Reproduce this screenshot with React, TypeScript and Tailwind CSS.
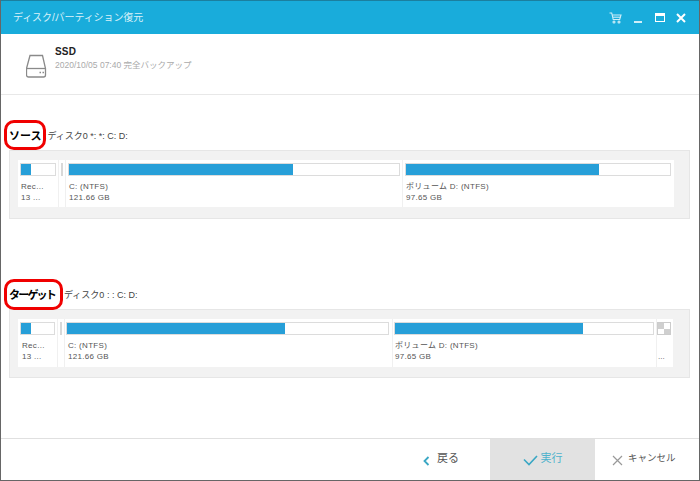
const font = "font-['Liberation_Sans','Noto_Sans_CJK_JP',sans-serif]";

function Part({ w, fill, l1, l2, ml = "", px = "pl-[1px]" }: { w: number; fill: number; l1: string; l2: string; ml?: string; px?: string }) {
  return (
    <div className={`shrink-0 h-full pt-[3px] ${ml}`} style={{ width: w }}>
      <div className="h-[13px] bg-white border border-[#dcdcdc]">
        <div className="h-full bg-[#279fd8]" style={{ width: `${fill}%` }} />
      </div>
      <div className={`${px} pt-[5px] text-[8px] leading-[11px] text-[#555] whitespace-nowrap tracking-[0.3px]`}>
        <div>{l1}</div>
        <div>{l2}</div>
      </div>
    </div>
  );
}

function Line({ cls = "" }: { cls?: string }) {
  return <div className={`shrink-0 w-px h-full bg-[#f0f0f0] ${cls}`} />;
}

function Handle({ cls = "" }: { cls?: string }) {
  return <div className={`shrink-0 w-[2px] h-[13px] mt-[3px] bg-[#d8d8d8] ${cls}`} />;
}

export default function App() {
  return (
    <div className={`${font} relative w-[700px] h-[481px] bg-white border border-t-0 border-[#666] flex flex-col overflow-hidden`}>
      {/* title bar */}
      <div className="h-[34px] shrink-0 bg-[#19acdb] border-t border-[#1b7f9f] flex items-center pl-[12px] pr-[13px]">
        <span className="text-[10px] text-[#d9f1f9] tracking-[-0.1px]">ディスク/パーティション復元</span>
        <div className="ml-auto flex items-center text-white">
          <svg width="13" height="12" viewBox="0 0 13 12" fill="none" stroke="#cfeef8" strokeWidth="1.1" className="mr-[12px]">
            <path d="M0.5 1h2.2l1.5 6.5h6.5l1.3-4.5H3.2" />
            <path d="M4 5.2h7.6" />
            <circle cx="5" cy="10" r="1" />
            <circle cx="10" cy="10" r="1" />
          </svg>
          <div className="w-[8px] h-[1.5px] bg-[#cfeef8] mt-[9px] mr-[13px]" />
          <div className="w-[10px] h-[9px] border border-white border-t-[3px] mr-[11px]" />
          <svg width="10" height="10" viewBox="0 0 10 10" stroke="white" strokeWidth="2">
            <path d="M1 1l8 8M9 1l-8 8" />
          </svg>
        </div>
      </div>

      {/* header */}
      <div className="h-[61px] shrink-0 border-b border-[#e8e8e8] flex pl-[25px]">
        <svg width="21" height="25" viewBox="0 0 21 25" fill="none" stroke="#8a8a8a" strokeWidth="1.3" className="mt-[20px]">
          <path d="M4 1.5h12.5l3 13v6.5a2 2 0 0 1-2 2h-15a2 2 0 0 1-2-2v-6.5z" />
          <path d="M1 14.5h19" />
          <path d="M13.5 18.5h1.5M16.5 18.5h1.5" strokeWidth="1.6" />
        </svg>
        <div className="ml-[8px] pt-[12px]">
          <div className="text-[10px] leading-[12px] font-bold text-[#222] tracking-[0.2px]">SSD</div>
          <div className="text-[8.5px] leading-[12px] mt-[1px] text-[#aaa]">2020/10/05 07:40 完全バックアップ</div>
        </div>
      </div>

      {/* source */}
      <div className="h-[343px] shrink-0 pl-[8px] pr-[9px]">
        <div className="h-[55px] flex items-end pb-[7px]">
          <span className="text-[11px] leading-[14px] font-bold text-black">ソース</span>
          <span className="text-[9px] leading-[14px] font-bold text-black ml-[2px]">:</span>
          <span className="text-[9px] leading-[14px] text-[#444] ml-[1px] whitespace-pre">ディスク0 *: *: C: D:</span>
        </div>
        <div className="h-[69px] bg-[#f2f2f2] border border-[#e6e6e6] pt-[9px] pl-[8px]">
          <div className="w-[656px] h-[47px] bg-white flex pl-[2px]">
            <Part w={36} fill={30} l1="Rec..." l2="13 ..." />
            <Line cls="ml-[2px]" />
            <Handle cls="ml-[2px] mr-[2px]" />
            <Line />
            <Part w={332} fill={68} l1="C: (NTFS)" l2="121.66 GB" ml="ml-[2px]" />
            <Line cls="ml-[2px]" />
            <Part w={266} fill={73} l1="ボリューム D: (NTFS)" l2="97.65 GB" ml="ml-[2px]" />
          </div>
        </div>

        <div className="h-[90px] flex items-end pb-[7px]">
          <span className="text-[11px] leading-[14px] font-bold text-black tracking-[-1.8px]">ターゲット</span>
          <span className="text-[9px] leading-[14px] font-bold text-black ml-[5px]">:</span>
          <span className="text-[9px] leading-[14px] text-[#444] ml-[1px] whitespace-pre">ディスク0 : : C: D:</span>
        </div>
        <div className="h-[69px] bg-[#f2f2f2] border border-[#e6e6e6] pt-[9px] pl-[8px]">
          <div className="w-[655px] h-[48px] bg-white flex pl-[2px]">
            <Part w={35} fill={30} l1="Rec..." l2="13 ..." px="pl-[2px]" />
            <Line cls="ml-[2px]" />
            <Handle cls="ml-[2px] mr-[2px]" />
            <Line />
            <Part w={323} fill={68} l1="C: (NTFS)" l2="121.66 GB" ml="ml-[1px]" px="pl-[2px]" />
            <Line cls="ml-[3px]" />
            <Part w={260} fill={73} l1="ボリューム D: (NTFS)" l2="97.65 GB" ml="ml-[1px]" />
            <Line cls="ml-[2px]" />
            <div className="w-[14px] pt-[3px] shrink-0">
              <div className="w-[14px] h-[13px] border border-[#ccc] grid grid-cols-2 grid-rows-2 bg-[#f4f4f4]">
                <div className="bg-[#cfcfcf]" />
                <div className="bg-white" />
                <div className="bg-white" />
                <div className="bg-[#cfcfcf]" />
              </div>
              <div className="text-[8px] leading-[11px] text-[#666] pt-[16px] pl-px">...</div>
            </div>
          </div>
        </div>
      </div>

      {/* footer */}
      <div className="flex-1 border-t border-[#e0e0e0] flex justify-end items-stretch">
        <div className="w-[80px] flex items-center text-[11px] text-[#555]">
          <svg width="7" height="10" viewBox="0 0 7 10" fill="none" stroke="#3aa7c4" strokeWidth="1.8" className="ml-[13px] mr-[7px] mt-[2px]">
            <path d="M5.5 1L1.5 5l4 4" />
          </svg>
          <span className="-mt-[3px]">戻る</span>
        </div>
        <div className="w-[105px] bg-[#e2e2e2] flex items-center justify-center text-[11px] text-[#4fb2cc]">
          <svg width="15" height="11" viewBox="0 0 15 11" fill="none" stroke="#3aa7c4" strokeWidth="1.6" className="mr-[3px] mt-[2px]">
            <path d="M1 4.5L6 9.5L14 1" />
          </svg>
          <span className="-mt-[3px]">実行</span>
        </div>
        <div className="w-[104px] flex items-center pl-[17px] text-[9.5px] text-[#555]">
          <svg width="11" height="11" viewBox="0 0 11 11" fill="none" stroke="#999" strokeWidth="1.2" className="mr-[5px] mt-[2px]">
            <path d="M1 1l9 9M10 1l-9 9" />
          </svg>
          <span className="-mt-[3px]">キャンセル</span>
        </div>
      </div>

      {/* red callouts */}
      <div className="absolute left-[3px] top-[120px] w-[42px] h-[30px] border-[3px] border-[#f00000] rounded-[10px]" />
      <div className="absolute left-[3px] top-[279px] w-[59px] h-[31px] border-[3px] border-[#f00000] rounded-[10px]" />
    </div>
  );
}
